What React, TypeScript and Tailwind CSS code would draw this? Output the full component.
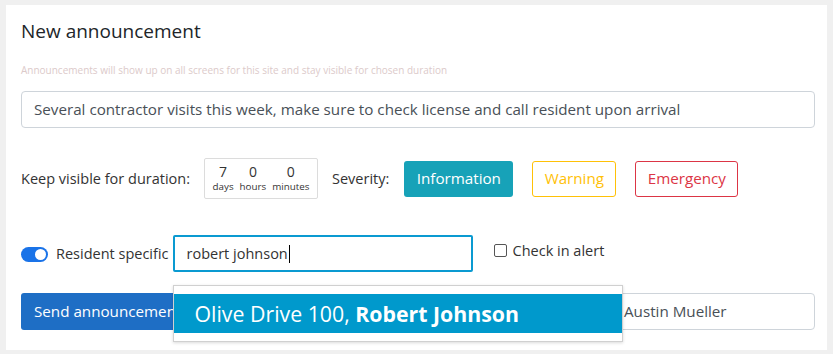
import { useState } from 'react'

const FONT = { fontFamily: '"Open Sans", "Noto Sans", sans-serif' }

function DurationBox() {
  const parts = [
    { value: '7', label: 'days' },
    { value: '0', label: 'hours' },
    { value: '0', label: 'minutes' },
  ]
  return (
    <div className="flex h-[41px] w-[114px] items-center justify-center gap-[6px] rounded-[2px] border border-[#dcdcdc]">
      {parts.map((p, i) => (
        <div key={i} className="flex flex-col items-center leading-none">
          <span className="text-[14px] text-[#333]">{p.value}</span>
          <span className="mt-[3px] text-[9.8px] text-[#333]">{p.label}</span>
        </div>
      ))}
    </div>
  )
}

function Toggle({ on }: { on: boolean }) {
  return (
    <div
      className={`flex h-[15px] w-[27px] items-center rounded-full px-[2px] ${
        on ? 'justify-end bg-[#1a73e8]' : 'justify-start bg-gray-300'
      }`}
    >
      <div className="h-[11px] w-[11px] rounded-full bg-white" />
    </div>
  )
}

export default function App() {
  const [severity] = useState('information')

  return (
    <div className="h-[354px] w-[833px] bg-[#f0f0f0] pl-[6px] pt-[5px]" style={FONT}>
      <div className="h-[345px] w-[821px] bg-white pl-[15px] pr-[11px] pt-[16px]">
        {/* Header */}
        <h1 className="text-[19px] leading-[20px] text-[#212529]">New announcement</h1>
        <p className="mt-[23px] text-[10px] leading-[12px] text-[#dccaca]">
          Announcements will show up on all screens for this site and stay visible for chosen duration
        </p>

        {/* Message */}
        <div className="mt-[15px] flex h-[37px] w-[794px] items-center rounded-[4px] border border-[#ced4da] px-[12px] text-[15.2px] text-[#495057]">
          Several contractor visits this week, make sure to check license and call resident upon arrival
        </div>

        {/* Duration / severity */}
        <div className="mt-[30px] flex items-center">
          <span className="text-[14.5px] text-[#333]">Keep visible for duration:</span>
          <div className="ml-[14px]">
            <DurationBox />
          </div>
          <span className="ml-[14px] text-[14.5px] text-[#333]">Severity:</span>
          <button
            className={`ml-[15px] h-[36px] w-[109px] rounded-[3px] text-[15.2px] ${
              severity === 'information' ? 'bg-[#17a2b8] text-white' : 'border border-[#17a2b8] text-[#17a2b8]'
            }`}
          >
            Information
          </button>
          <button className="ml-[19px] h-[36px] w-[84px] rounded-[3px] border border-[#ffc107] text-[15.2px] text-[#ffc107]">
            Warning
          </button>
          <button className="ml-[19px] h-[36px] w-[103px] rounded-[3px] border border-[#dc3545] text-[15.2px] text-[#dc3545]">
            Emergency
          </button>
        </div>

        {/* Resident row */}
        <div className="mt-[36px] flex items-start">
          <div className="mt-[12px]">
            <Toggle on />
          </div>
          <span className="ml-[8px] mt-[8px] text-[14.5px] text-[#333]">Resident specific</span>
          <div className="relative ml-[4px]">
            <div className="flex h-[37px] w-[300px] items-center rounded-[2px] border-2 border-[#0a9ad1] px-[12px] text-[14.5px] text-[#333]">
              robert johnson
              <span className="ml-[1px] h-[18px] w-[1px] bg-black" />
            </div>
            {/* Autocomplete dropdown */}
            <div className="absolute left-0 top-[50px] z-10 w-[450px] border border-[#d0d0d0] bg-white py-[8px] shadow-[0_1px_3px_rgba(0,0,0,0.15)]">
              <div className="flex h-[39px] items-center bg-[#0099cc] px-[21px] text-[21.3px] text-white">
                Olive Drive 100,&nbsp;<b className="font-bold">Robert Johnson</b>
              </div>
            </div>
          </div>
          <label className="ml-[21px] mt-[5px] flex items-center gap-[6px] text-[14.5px] text-[#333]">
            <span className="h-[13px] w-[13px] rounded-[2px] border border-[#555]" />
            Check in alert
          </label>
        </div>

        {/* Send row */}
        <div className="mt-[21px] flex items-center gap-[10px]">
          <button className="h-[37px] w-[170px] shrink-0 rounded-[3px] bg-[#1e6ec5] pl-[13px] text-left text-[15.2px] text-white">
            Send announcement
          </button>
          <div className="flex h-[37px] w-[614px] items-center rounded-[4px] border border-[#ced4da] pl-[422px] text-[15.2px] text-[#495057]">
            Austin Mueller
          </div>
        </div>
      </div>
    </div>
  )
}
